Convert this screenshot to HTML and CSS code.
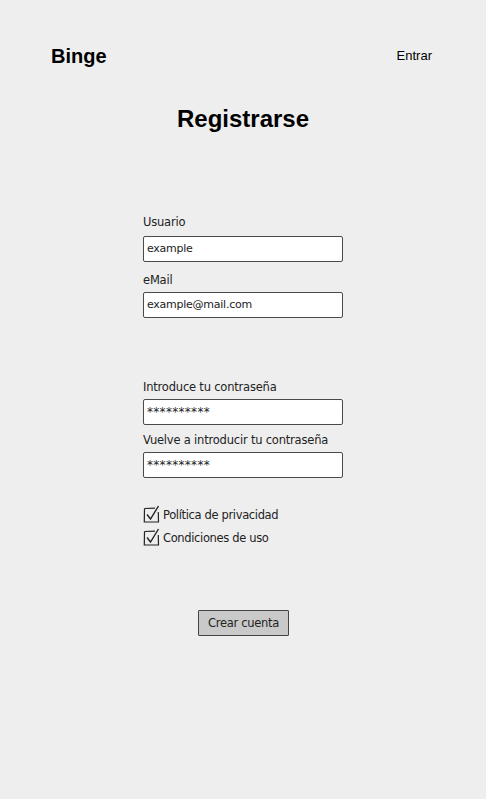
FILE: index.html
```html
<!DOCTYPE html>
<html lang="es">
<head>
<meta charset="utf-8">
<title>Binge - Registrarse</title>
<link rel="stylesheet" href="styles.css">
</head>
<body>
<header class="top">
  <div class="brand">Binge</div>
  <a class="login" href="#">Entrar</a>
</header>
<h1 class="title">Registrarse</h1>
<form class="form">
  <label class="lbl lbl-first">Usuario</label>
  <div class="field">example</div>
  <label class="lbl">eMail</label>
  <div class="field">example@mail.com</div>
  <label class="lbl lbl-sep">Introduce tu contraseña</label>
  <div class="field pw">**********</div>
  <label class="lbl lbl-tight">Vuelve a introducir tu contraseña</label>
  <div class="field pw">**********</div>
  <div class="checks">
    <div class="check">
      <svg class="cb" width="18" height="18" viewBox="0 0 18 18">
        <path d="M1.5 3.5 L12 3.2 M1.5 3.5 L1.3 17 L15.5 16.8 L15.3 7" fill="none" stroke="#222" stroke-width="1.2"/>
        <path d="M4 9.5 L7.5 14 L15.5 1" fill="none" stroke="#222" stroke-width="1.4"/>
      </svg>
      <span>Política de privacidad</span>
    </div>
    <div class="check">
      <svg class="cb" width="18" height="18" viewBox="0 0 18 18">
        <path d="M1.5 3.5 L12 3.2 M1.5 3.5 L1.3 17 L15.5 16.8 L15.3 7" fill="none" stroke="#222" stroke-width="1.2"/>
        <path d="M4 9.5 L7.5 14 L15.5 1" fill="none" stroke="#222" stroke-width="1.4"/>
      </svg>
      <span>Condiciones de uso</span>
    </div>
  </div>
  <div class="actions">
    <button type="button" class="btn">Crear cuenta</button>
  </div>
</form>
</body>
</html>
```
FILE: styles.css
```css
html, body {
  margin: 0;
  padding: 0;
  background: #eeeeee;
}
body {
  width: 486px;
  min-height: 799px;
  font-family: "Liberation Sans", Arial, sans-serif;
  color: #000;
}
.top {
  display: flex;
  justify-content: space-between;
  align-items: center;
  height: 24px;
  padding: 44px 54px 0 51px;
}
.brand {
  font-size: 20px;
  font-weight: bold;
  line-height: 24px;
}
.login {
  font-size: 13px;
  line-height: 16px;
  color: #000;
  text-decoration: none;
}
.title {
  margin: 37px 0 0 0;
  text-align: center;
  font-size: 24px;
  line-height: 28px;
  font-weight: bold;
}
.form {
  width: 200px;
  margin: 81px 0 0 143px;
  display: flex;
  flex-direction: column;
  font-family: "DejaVu Sans", sans-serif;
  font-size: 11.5px;
  color: #222;
}
.lbl {
  display: block;
  line-height: 16px;
  height: 16px;
  margin-top: 10px;
  margin-bottom: 4px;
  letter-spacing: -0.2px;
}
.lbl-first {
  margin-top: 0;
  margin-bottom: 6px;
}
.lbl-sep {
  margin-top: 61px;
}
.lbl-tight {
  margin-top: 7px;
}
.field {
  box-sizing: border-box;
  height: 26px;
  background: #fff;
  border: 1px solid #4a4a4a;
  border-radius: 2px;
  padding: 0 4px 0 3px;
  line-height: 24px;
  font-size: 11px;
  color: #222;
  letter-spacing: -0.25px;
}
.pw {
  font-size: 12px;
  letter-spacing: 0.3px;
}
.checks {
  margin-top: 28px;
  display: flex;
  flex-direction: column;
  gap: 5px;
}
.check {
  display: flex;
  align-items: center;
  height: 18px;
  gap: 2px;
  font-size: 11.5px;
  letter-spacing: -0.35px;
}
.cb {
  display: block;
  flex: none;
  margin-top: -2px;
}
.actions {
  display: flex;
  justify-content: center;
  margin-top: 63px;
}
.btn {
  box-sizing: border-box;
  width: 91px;
  height: 26px;
  margin-left: 1px;
  background: #c9c9c9;
  border: 1px solid #444;
  border-radius: 1px;
  font-family: "DejaVu Sans", sans-serif;
  font-size: 11.5px;
  color: #222;
  padding: 0;
  letter-spacing: -0.3px;
}
```
